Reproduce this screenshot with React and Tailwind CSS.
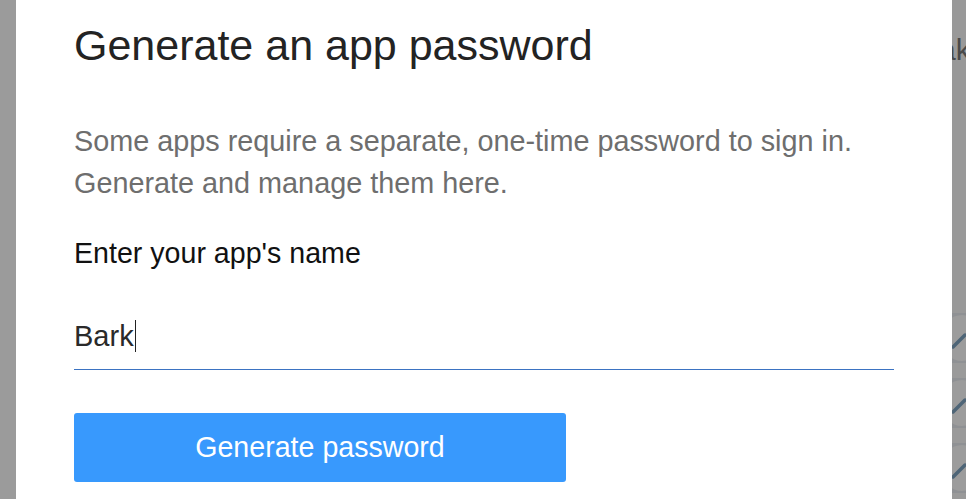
export default function App() {
  const rows = [0, 1, 2];
  return (
    <div className="flex h-[499px] w-[966px] overflow-hidden bg-[#999999]" style={{ fontFamily: '"Liberation Sans", Arial, sans-serif' }}>
      <div className="w-[16px] shrink-0 bg-[#9b9b9b]" />
      <div className="w-[936px] shrink-0 bg-white pl-[58px] pr-[58px]">
        <h1 className="mt-[20px] whitespace-nowrap text-[43px] leading-[50px] text-[#232323]">Generate an app password</h1>
        <p className="mt-[50px] whitespace-nowrap text-[28.8px] leading-[42px] text-[#6e6e6e]">
          Some apps require a separate, one-time password to sign in.
          <br />
          Generate and manage them here.
        </p>
        <div className="mt-[32px] text-[28.6px] leading-[34px] text-[#111111]">Enter your app's name</div>
        <div className="mt-[49px] flex items-center border-b border-[#3b73c2] pb-[16px] text-[29px] leading-[34px] text-[#2a2a2a]">
          <span>Bark</span>
          <span className="ml-[1px] h-[32px] w-[1px] bg-[#222222]" />
        </div>
        <button className="mt-[43px] flex h-[69px] w-[492px] items-center justify-center rounded-[3px] bg-[#3899fd] text-[28.6px] text-white">
          Generate password
        </button>
      </div>
      <div className="flex-1 flex flex-col overflow-hidden">
        <div className="mt-[30px] h-[40px] -ml-[13px] whitespace-nowrap text-[30px] leading-[40px] text-[#4a4a4a]">ak</div>
        <div className="mt-[112px] h-[2px] bg-[#8a8a8a]" />
        <div className="mt-[74px] h-[2px] bg-[#5f6b74]" />
        <div className="mt-[33px] h-[2px] bg-[#5f6b74]" />
        <div className="mt-[24px] flex flex-col">
          {rows.map((r) => (
            <div key={r} className="flex h-[65px] flex-col">
              <div className="relative h-[50px] bg-[#8f9194]">
                <div className="absolute left-[-10px] top-[2px] h-[46px] w-[40px] rounded-full bg-[#9c9c9c]" />
                <svg className="absolute left-0 top-[14px]" width="14" height="26" viewBox="0 0 14 26">
                  <path d="M1 20 L13 8" stroke="#4e6577" strokeWidth="3.5" strokeLinecap="round" />
                </svg>
              </div>
              <div className="h-[15px] bg-[#9a9a9a]" />
            </div>
          ))}
        </div>
      </div>
    </div>
  );
}
